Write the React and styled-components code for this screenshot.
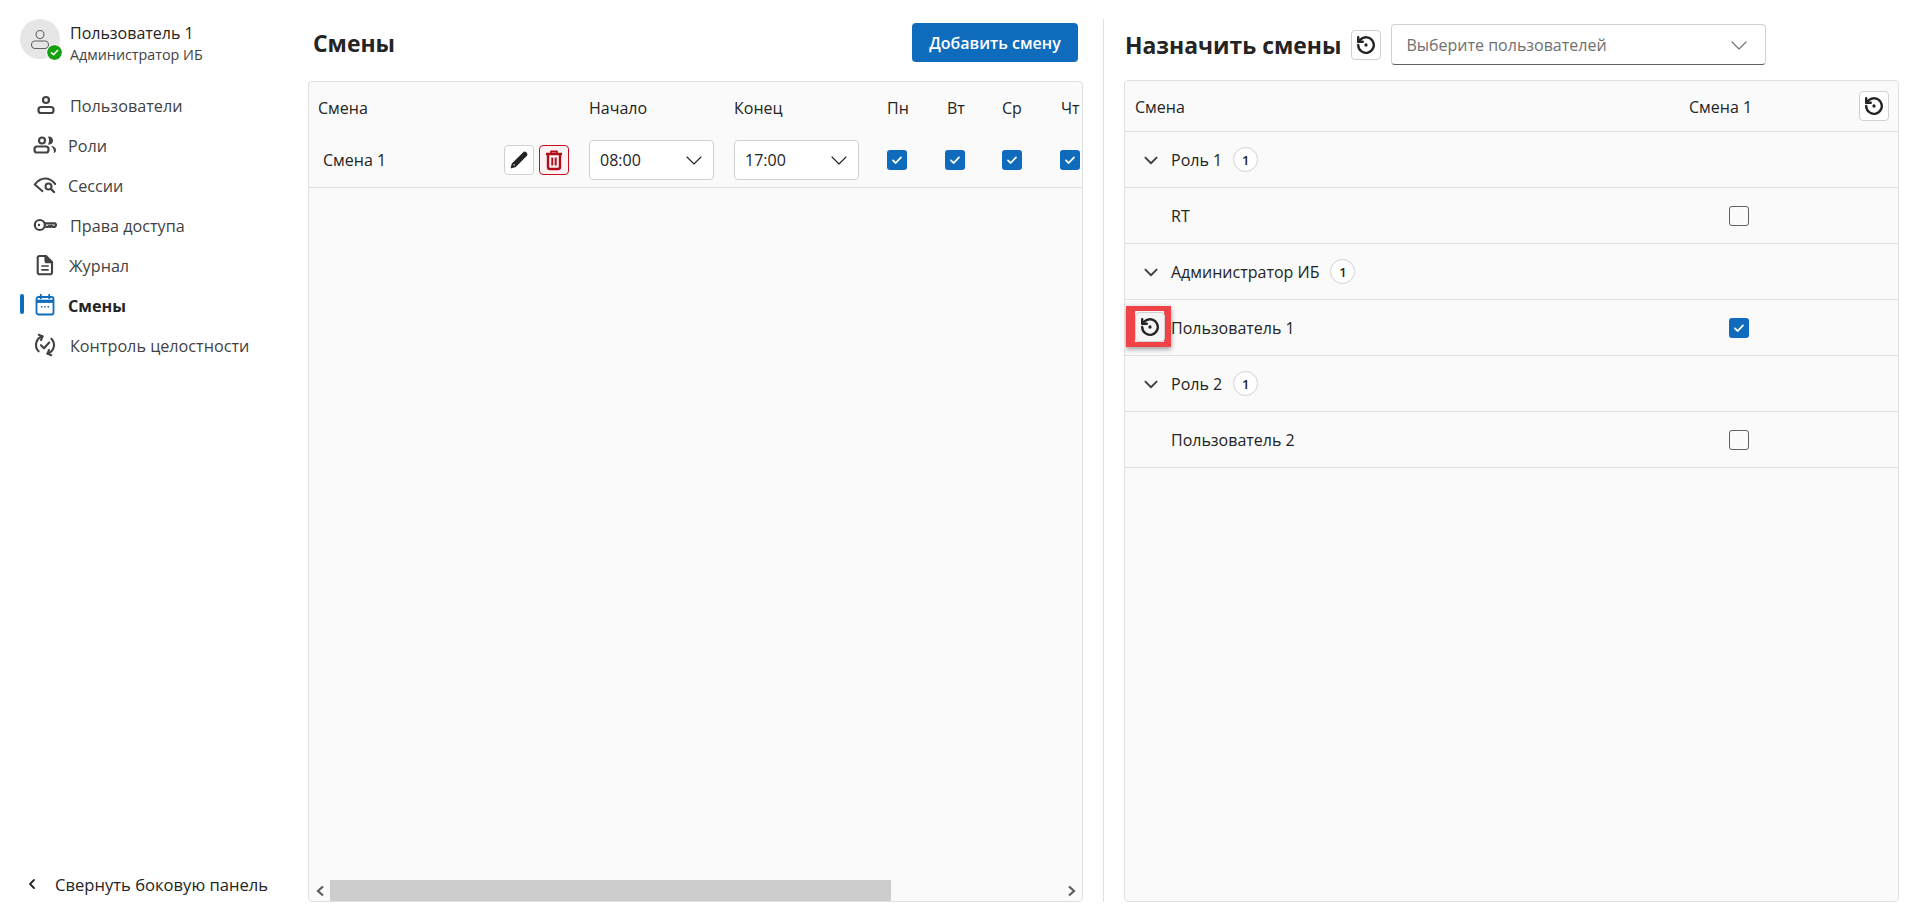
import React from "react";
import styled, { createGlobalStyle } from "styled-components";

const GlobalStyle = createGlobalStyle`
  html, body { margin: 0; padding: 0; height: 100%; background: #fff; }
  body { font-family: "Open Sans", "Noto Sans", sans-serif; color: #242424; }
  #root { height: 100%; }
  * { box-sizing: border-box; }
`;

const Page = styled.div`
  display: flex;
  height: 923px;
  overflow: hidden;
`;

const Sidebar = styled.aside`
  width: 308px;
  flex: none;
  display: flex;
  flex-direction: column;
  padding: 19px 0 0 20px;
`;

const Profile = styled.div`
  display: flex;
  align-items: center;
  gap: 10px;
  height: 40px;
  margin-bottom: 26px;
`;

const Avatar = styled.div`
  position: relative;
  width: 40px;
  height: 40px;
  border-radius: 50%;
  background: #e6e6e6;
  display: flex;
  align-items: center;
  justify-content: center;
  color: #616161;
`;

const StatusDot = styled.span`
  position: absolute;
  right: -2px;
  bottom: -1px;
  width: 15px;
  height: 15px;
  border-radius: 50%;
  background: #13a10e;
  outline: 1.5px solid #fff;
  display: flex;
  align-items: center;
  justify-content: center;
  color: #fff;
`;

const ProfileText = styled.div`
  display: flex;
  flex-direction: column;
  padding-top: 8px;
`;

const ProfileName = styled.div`
  font-size: 16px;
  line-height: 21px;
`;

const ProfileRole = styled.div`
  font-size: 14.3px;
  line-height: 18px;
  color: #424242;
  margin-top: 2px;
`;

const Nav = styled.nav`
  display: flex;
  flex-direction: column;
  flex: 1;
`;

const NavItem = styled.div`
  position: relative;
  height: 40px;
  display: flex;
  align-items: center;
  padding-left: ${(p) => p.$iconLeft}px;
  gap: ${(p) => p.$gap}px;
  font-size: 16.2px;
  font-weight: ${(p) => (p.$active ? 700 : 400)};
  color: ${(p) => (p.$active ? "#242424" : "#424242")};
`;

const NavLabel = styled.span`
  padding-top: 2px;
`;

const ActiveMark = styled.span`
  position: absolute;
  left: 0;
  top: 9px;
  width: 4px;
  height: 20px;
  border-radius: 2px;
  background: #0f6cbd;
`;

const NavIconBox = styled.span`
  width: 24px;
  height: 24px;
  flex: none;
  display: flex;
  align-items: center;
  justify-content: center;
  color: ${(p) => (p.$active ? "#0f6cbd" : "#424242")};
`;

const Collapse = styled.div`
  display: flex;
  align-items: center;
  gap: 17px;
  height: 40px;
  margin-bottom: 19px;
  padding-left: 6px;
  font-size: 16.6px;
  color: #242424;
`;

const Panel = styled.section`
  display: flex;
  flex-direction: column;
  padding-bottom: 21px;
  width: 775px;
  flex: none;
`;

const LeftHeader = styled.header`
  height: 81px;
  flex: none;
  display: flex;
  align-items: flex-start;
  justify-content: space-between;
  padding: 23px 5px 0 5px;
`;

const Title = styled.h2`
  margin: ${(p) => p.$drop}px 0 0;
  font-size: 22.9px;
  line-height: 40px;
  font-weight: 700;
  color: #242424;
  white-space: nowrap;
`;

const PrimaryButton = styled.button`
  width: 166px;
  height: 39px;
  border: none;
  border-radius: 4px;
  background: #0f6cbd;
  color: #fff;
  font: 600 16px "Open Sans", sans-serif;
  padding: 0;
`;

const TableBox = styled.div`
  flex: 1;
  min-height: 0;
  display: flex;
  flex-direction: column;
  background: #fafafa;
  border: 1px solid #e0e0e0;
  border-radius: 4px;
  overflow: hidden;
`;

const ShiftGrid = styled.div`
  flex: 1;
  min-height: 0;
  overflow: hidden;
`;

const ShiftRow = styled.div`
  display: grid;
  grid-template-columns: 280px 145px 153px 58px 57px 58px 58px;
  align-items: center;
  height: ${(p) => p.$height}px;
  border-bottom: ${(p) => (p.$line ? "1px solid #e0e0e0" : "none")};
  font-size: 16px;
`;

const Cell = styled.div`
  padding-left: ${(p) => p.$pad || 0}px;
  color: #242424;
  white-space: nowrap;
`;

const NameCell = styled.div`
  display: flex;
  align-items: center;
  justify-content: space-between;
  padding: 0 20px 0 14px;
`;

const IconActions = styled.div`
  display: flex;
  gap: 5px;
`;

const IconButton = styled.button`
  width: 30px;
  height: 30px;
  padding: 0;
  flex: none;
  display: flex;
  align-items: center;
  justify-content: center;
  border-radius: 4px;
  border: 1px solid ${(p) => (p.$danger ? "#c50f1f" : "#d1d1d1")};
  background: ${(p) => (p.$danger ? "#fdf3f4" : "#fff")};
  color: ${(p) => (p.$danger ? "#b10e1c" : "#242424")};
`;

const SelectBox = styled.div`
  width: ${(p) => p.$width}px;
  height: ${(p) => p.$height}px;
  display: flex;
  align-items: center;
  justify-content: space-between;
  padding: 0 ${(p) => p.$padRight}px 0 ${(p) => p.$padLeft}px;
  background: #fff;
  border: 1px solid #d1d1d1;
  border-bottom-color: ${(p) => (p.$strong ? "#616161" : "#d1d1d1")};
  border-radius: 4px;
  font-size: 16px;
  color: ${(p) => (p.$placeholder ? "#707070" : "#242424")};
`;

const Check = styled.span`
  width: 20px;
  height: 20px;
  flex: none;
  display: flex;
  align-items: center;
  justify-content: center;
  border-radius: 3px;
  background: ${(p) => (p.$on ? "#0f6cbd" : "transparent")};
  border: ${(p) => (p.$on ? "none" : "1px solid #616161")};
  color: #fff;
`;

const ScrollTrack = styled.div`
  height: 21px;
  flex: none;
  display: flex;
  align-items: center;
  color: #5c5c5c;
`;

const ScrollArrow = styled.span`
  width: 21px;
  height: 21px;
  flex: none;
  display: flex;
  align-items: center;
  justify-content: center;
`;

const ScrollRail = styled.div`
  flex: 1;
  height: 21px;
`;

const ScrollThumb = styled.div`
  height: 100%;
  background: #cdcdcd;
`;

const Divider = styled.div`
  width: 1px;
  flex: none;
  margin: 19px 20px 21px 20px;
  background: #e0e0e0;
`;

const RightHeader = styled.header`
  height: 80px;
  flex: none;
  display: flex;
  align-items: flex-start;
  padding-top: 24px;
  padding-left: 1px;
  gap: 10px;
`;

const TitleGroup = styled.div`
  display: flex;
  align-items: center;
  height: 41px;
  gap: 10px;
`;

const AssignRow = styled.div`
  position: relative;
  display: flex;
  align-items: center;
  height: ${(p) => p.$height || 56}px;
  flex: none;
  padding-left: ${(p) => p.$pad}px;
  border-bottom: 1px solid #e0e0e0;
  font-size: 16px;
  color: #242424;
`;

const RowLabel = styled.div`
  flex: 1;
  display: flex;
  align-items: center;
  padding-top: ${(p) => p.$drop || 0}px;
`;

const ChevronBox = styled.span`
  width: 18px;
  height: 18px;
  margin-right: 11px;
  flex: none;
  display: flex;
  align-items: center;
  justify-content: center;
  color: #424242;
`;

const Badge = styled.span`
  width: 25px;
  height: 25px;
  margin-left: 11px;
  border-radius: 50%;
  border: 1px solid #d1d1d1;
  background: #fff;
  display: flex;
  align-items: center;
  justify-content: center;
  font-size: 13px;
  font-weight: 600;
`;

const ShiftColumn = styled.div`
  width: 332px;
  flex: none;
  display: flex;
  align-items: center;
`;

const ShiftColumnTitle = styled.span`
  width: 293px;
  padding: 2px 0 0 123px;
  white-space: nowrap;
`;

const CheckColumn = styled.div`
  padding-left: 163px;
`;

const Highlight = styled.div`
  position: absolute;
  left: 1px;
  top: 6px;
  width: 45px;
  height: 41px;
  border: solid #f04348;
  border-width: 5px 7px 5px 9px;
  box-shadow: 0 2px 5px rgba(0, 0, 0, 0.4);
  display: flex;
  align-items: center;
  justify-content: center;
  background: #f5f5f5;
`;

const HighlightButton = styled(IconButton)`
  background: #f5f5f5;
`;

const ResetIcon = () => (
  <svg width="22" height="22" viewBox="0 0 24 24" fill="none" stroke="currentColor" strokeWidth="2.6" strokeLinecap="round" strokeLinejoin="round">
    <path d="M3.5 12a8.5 8.5 0 1 0 2.6-6.1L3.5 8.4" />
    <path d="M3.5 3.5v5h5" />
    <circle cx="12" cy="12" r="1.8" fill="currentColor" stroke="none" />
  </svg>
);

const ChevronDown = ({ size = 20, width = 1.1 }) => (
  <svg width={size} height={size} viewBox="0 0 20 20" fill="none" stroke="currentColor" strokeWidth={width} strokeLinecap="round" strokeLinejoin="round">
    <path d="M3 7l7 7 7-7" />
  </svg>
);

const CheckMark = () => (
  <svg width="12" height="12" viewBox="0 0 12 12" fill="none" stroke="currentColor" strokeWidth="1.8" strokeLinecap="round" strokeLinejoin="round">
    <path d="M2 6.4l2.7 2.6L10 3.4" />
  </svg>
);

const PencilIcon = () => (
  <svg width="20" height="20" viewBox="0 0 20 20" fill="currentColor">
    <path d="M14 2.4a2.3 2.3 0 0 1 3.4 0l.3.3a2.3 2.3 0 0 1 0 3.3L7 16.7c-.3.3-.6.5-1 .6l-3.4 1c-.6.1-1-.3-.9-.9l1-3.4c.1-.4.3-.7.6-1L14 2.4z" />
    <path d="M4.6 14.4l1 1" stroke="#fff" strokeWidth="1.2" fill="none" />
  </svg>
);

const TrashIcon = () => (
  <svg width="22" height="22" viewBox="0 0 22 22" fill="none" stroke="currentColor" strokeWidth="2.4" strokeLinejoin="round">
    <path d="M3 5h16" />
    <path d="M8 4.5V2.5h6v2" strokeWidth="1.8" />
    <path d="M5 5v13a2 2 0 0 0 2 2h8a2 2 0 0 0 2-2V5" />
    <path d="M9.3 8.5v8M12.7 8.5v8" strokeWidth="2" />
  </svg>
);

const UserIcon = () => (
  <svg width="22" height="22" viewBox="0 0 22 22" fill="none" stroke="currentColor" strokeWidth="2.2">
    <circle cx="11" cy="6" r="3" />
    <rect x="3.5" y="13" width="15" height="6" rx="2.6" />
  </svg>
);

const RolesIcon = () => (
  <svg width="24" height="24" viewBox="0 0 24 24" fill="none" stroke="currentColor" strokeWidth="2.2">
    <circle cx="9" cy="7.5" r="3" />
    <rect x="1.5" y="13.5" width="14" height="6" rx="2.6" />
    <path d="M15 3.6c3-.4 5 1.3 5 4s-2 4.4-5 4c1.4-2.4 1.4-5.6 0-8z" fill="currentColor" stroke="none" />
    <path d="M18 13c3 .1 5 1.7 5 4 0 1.7-.8 2.8-2.2 3 .5-2.6-.4-5.2-2.800-7z" fill="currentColor" stroke="none" />
  </svg>
);

const SessionIcon = () => (
  <svg width="24" height="24" viewBox="0 0 24 24" fill="none" stroke="currentColor" strokeWidth="2" strokeLinecap="round" strokeLinejoin="round">
    <path d="M1.8 11.5C5 7.5 8.5 5.6 12.2 5.6c3.7 0 7 1.8 10 5.4" />
    <path d="M1.8 11.5l7.7 6.7" />
    <circle cx="15.5" cy="13.5" r="3" />
    <path d="M18 16l3 3" strokeWidth="2.4" />
  </svg>
);

const KeyIcon = () => (
  <svg width="24" height="24" viewBox="0 0 24 24" fill="none" stroke="currentColor" strokeWidth="2.2" strokeLinejoin="round">
    <circle cx="6.8" cy="12" r="5" />
    <circle cx="6" cy="12" r="1.2" fill="currentColor" stroke="none" />
    <path d="M11.8 10.3h10.2l1.4 1.8-1.8 1.8h-1.8l-1.2-1-1.2 1-1.2-1-1.2 1h-2.8" />
  </svg>
);

const DocIcon = () => (
  <svg width="22" height="22" viewBox="0 0 22 22" fill="none" stroke="currentColor" strokeWidth="2.1" strokeLinejoin="round">
    <path d="M5.5 2h6.5l6 6v10.500a1.800 1.800 0 0 1-1.800 1.800H5.500a1.800 1.800 0 0 1-1.800-1.800V3.800A1.800 1.800 0 0 1 5.500 2z" />
    <path d="M11.5 2.5v4.2c0 .9.6 1.5 1.5 1.5h4.5" fill="currentColor" />
    <path d="M7.3 12h7.4M7.3 15.8h7.4" strokeWidth="1.7" />
  </svg>
);

const CalendarIcon = () => (
  <svg width="22" height="22" viewBox="0 0 22 22" fill="none" stroke="currentColor" strokeWidth="1.8">
    <rect x="2.5" y="3" width="17" height="17.5" rx="2" />
    <path d="M2.5 7.3h17" strokeWidth="3.2" />
    <path d="M6.8 .8v3.5M15.2 .8v3.5" strokeLinecap="round" />
    <path d="M7 12.7h1.4M10.3 12.7h1.4M13.6 12.7h1.4" strokeWidth="1.6" />
  </svg>
);

const SyncCheckIcon = () => (
  <svg width="24" height="24" viewBox="0 0 24 24" fill="none" stroke="currentColor" strokeWidth="2.1" strokeLinecap="round" strokeLinejoin="round">
    <path d="M5.6 18.3A9 9 0 0 1 9.5 3.35" />
    <path d="M5.8 1.8L9.5 3.35L8 7" />
    <path d="M18.4 5.7A9 9 0 0 1 14.5 20.65" />
    <path d="M18.2 22.2L14.5 20.65L16 17" />
    <path d="M8 12.2l3 3 5.2-5.7" />
  </svg>
);

const AvatarIcon = () => (
  <svg width="24" height="24" viewBox="0 0 24 24" fill="none" stroke="currentColor" strokeWidth="1.1">
    <circle cx="12" cy="7.5" r="4" />
    <rect x="3.5" y="14" width="17" height="7.5" rx="3.7" />
  </svg>
);

const navItems = [
  { label: "Пользователи", Icon: UserIcon, iconLeft: 14, gap: 12 },
  { label: "Роли", Icon: RolesIcon, iconLeft: 13, gap: 11 },
  { label: "Сессии", Icon: SessionIcon, iconLeft: 13, gap: 11 },
  { label: "Права доступа", Icon: KeyIcon, iconLeft: 13, gap: 13 },
  { label: "Журнал", Icon: DocIcon, iconLeft: 13, gap: 12 },
  { label: "Смены", Icon: CalendarIcon, iconLeft: 13, gap: 11, active: true },
  { label: "Контроль целостности", Icon: SyncCheckIcon, iconLeft: 13, gap: 13 },
];

const days = [
  { name: "Пн", pad: 0 },
  { name: "Вт", pad: 2 },
  { name: "Ср", pad: 0 },
  { name: "Чт", pad: 1 },
];

const assignGroups = [
  { role: "Роль 1", user: "RT", checked: false },
  { role: "Администратор ИБ", user: "Пользователь 1", checked: true, highlighted: true },
  { role: "Роль 2", user: "Пользователь 2", checked: false },
];

export default function App() {
  return (
    <Page>
      <GlobalStyle />
      <Sidebar>
        <Profile>
          <Avatar>
            <AvatarIcon />
            <StatusDot>
              <svg width="9" height="9" viewBox="0 0 12 12" fill="none" stroke="currentColor" strokeWidth="2.2" strokeLinecap="round" strokeLinejoin="round">
                <path d="M2 6.4l2.7 2.6L10 3.4" />
              </svg>
            </StatusDot>
          </Avatar>
          <ProfileText>
            <ProfileName>Пользователь 1</ProfileName>
            <ProfileRole>Администратор ИБ</ProfileRole>
          </ProfileText>
        </Profile>
        <Nav>
          {navItems.map(({ label, Icon, iconLeft, gap, active }) => (
            <NavItem key={label} $active={active} $iconLeft={iconLeft} $gap={gap}>
              {active && <ActiveMark />}
              <NavIconBox $active={active}>
                <Icon />
              </NavIconBox>
              <NavLabel>{label}</NavLabel>
            </NavItem>
          ))}
        </Nav>
        <Collapse>
          <svg width="12" height="12" viewBox="0 0 12 12" fill="none" stroke="#242424" strokeWidth="1.8" strokeLinecap="round" strokeLinejoin="round">
            <path d="M8 2L4 6l4 4" />
          </svg>
          Свернуть боковую панель
        </Collapse>
      </Sidebar>

      <Panel>
        <LeftHeader>
          <Title $drop={1}>Смены</Title>
          <PrimaryButton>Добавить смену</PrimaryButton>
        </LeftHeader>
        <TableBox>
          <ShiftGrid>
            <ShiftRow $height={51}>
              <Cell $pad={9}>Смена</Cell>
              <Cell>Начало</Cell>
              <Cell>Конец</Cell>
              {days.map((d) => (
                <Cell key={d.name} $pad={d.pad}>{d.name}</Cell>
              ))}
            </ShiftRow>
            <ShiftRow $height={55} $line>
              <NameCell>
                Смена 1
                <IconActions>
                  <IconButton>
                    <PencilIcon />
                  </IconButton>
                  <IconButton $danger>
                    <TrashIcon />
                  </IconButton>
                </IconActions>
              </NameCell>
              <SelectBox $width={125} $height={40} $padLeft={10} $padRight={9}>
                08:00
                <ChevronDown />
              </SelectBox>
              <SelectBox $width={125} $height={40} $padLeft={10} $padRight={9}>
                17:00
                <ChevronDown />
              </SelectBox>
              {days.map((d) => (
                <Cell key={d.name}>
                  <Check $on>
                    <CheckMark />
                  </Check>
                </Cell>
              ))}
            </ShiftRow>
          </ShiftGrid>
          <ScrollTrack>
            <ScrollArrow>
              <svg width="10" height="12" viewBox="0 0 10 12" fill="none" stroke="currentColor" strokeWidth="2.2">
                <path d="M8 1.5L3 6l5 4.5" />
              </svg>
            </ScrollArrow>
            <ScrollRail>
              <ScrollThumb style={{ width: `${(561 / 731) * 100}%` }} />
            </ScrollRail>
            <ScrollArrow>
              <svg width="10" height="12" viewBox="0 0 10 12" fill="none" stroke="currentColor" strokeWidth="2.2">
                <path d="M2 1.5L7 6l-5 4.5" />
              </svg>
            </ScrollArrow>
          </ScrollTrack>
        </TableBox>
      </Panel>

      <Divider />

      <Panel>
        <RightHeader>
          <TitleGroup>
            <Title $drop={3}>Назначить смены</Title>
            <IconButton>
              <ResetIcon />
            </IconButton>
          </TitleGroup>
          <SelectBox $width={375} $height={41} $padLeft={14} $padRight={16} $placeholder $strong>
            Выберите пользователей
            <ChevronDown />
          </SelectBox>
        </RightHeader>
        <TableBox>
          <AssignRow $height={51} $pad={10}>
            <RowLabel $drop={2}>Смена</RowLabel>
            <ShiftColumn>
              <ShiftColumnTitle>Смена 1</ShiftColumnTitle>
              <IconButton>
                <ResetIcon />
              </IconButton>
            </ShiftColumn>
          </AssignRow>
          {assignGroups.map(({ role, user, checked, highlighted }) => (
            <React.Fragment key={role}>
              <AssignRow $pad={17}>
                <RowLabel>
                  <ChevronBox>
                    <ChevronDown size={16} width={2.4} />
                  </ChevronBox>
                  {role}
                  <Badge>1</Badge>
                </RowLabel>
              </AssignRow>
              <AssignRow $pad={46}>
                {highlighted && (
                  <Highlight>
                    <HighlightButton>
                      <ResetIcon />
                    </HighlightButton>
                  </Highlight>
                )}
                <RowLabel>{user}</RowLabel>
                <ShiftColumn>
                  <CheckColumn>
                    <Check $on={checked}>{checked && <CheckMark />}</Check>
                  </CheckColumn>
                </ShiftColumn>
              </AssignRow>
            </React.Fragment>
          ))}
        </TableBox>
      </Panel>
    </Page>
  );
}
